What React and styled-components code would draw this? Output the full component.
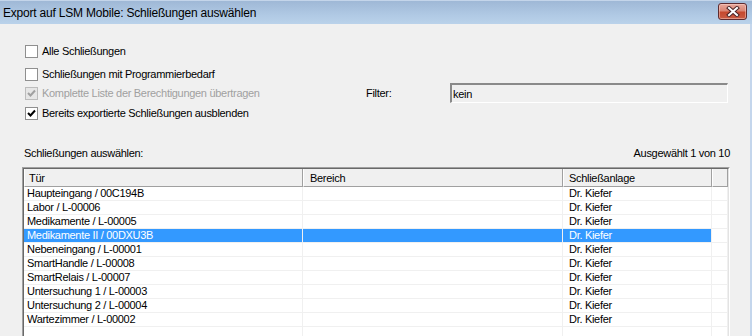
import React from 'react';
import styled, { createGlobalStyle } from 'styled-components';

const GlobalStyle = createGlobalStyle`
    body{
        margin: 0;
        background: #f0f0f0;
        font-family: "Liberation Sans", Arial, sans-serif;
        overflow: hidden;
    }
`

const Window = styled.div`
    width: 752px;
    height: 336px;
    display: flex;
    flex-direction: column;
    overflow: hidden;
`

const TitleBar = styled.header`
    height: 24px;
    flex-shrink: 0;
    box-sizing: border-box;
    border-top: 1px solid #c4d5ea;
    background: linear-gradient(to bottom, #9fb8d6 0%, #b0c9e4 60%, #bad2ea 100%);
    display: flex;
    align-items: center;
    justify-content: space-between;
    padding: 0 5px 0 3px;

    span{
        font-size: 12px;
        color: #000;
        letter-spacing: -0.2px;
    }
`

const CloseButton = styled.div`
    width: 29px;
    height: 17px;
    box-sizing: border-box;
    margin-top: -2px;
    border: 1px solid #5e2b2f;
    border-radius: 3px;
    background: linear-gradient(to bottom, #e8a89c 0%, #d98574 45%, #c5492f 55%, #c95c44 100%);
    box-shadow: inset 0 0 0 1px rgba(255, 220, 210, 0.45);
    display: flex;
    align-items: center;
    justify-content: center;
`

const Body = styled.main`
    flex: 1;
    background: #f0f0f0;
    border-right: 2px solid #c4d6ec;
    display: flex;
    flex-direction: column;
    font-size: 11px;
    letter-spacing: -0.3px;
    color: #000;
`

const CheckRow = styled.div`
    height: 18px;
    margin-top: ${(p) => p.$top}px;
    padding-left: 25px;
    display: flex;
    align-items: center;
`

const CheckLabel = styled.label`
    display: flex;
    align-items: center;
    gap: 4px;
    width: ${(p) => (p.$width ? `${p.$width}px` : 'auto')};
    color: ${(p) => (p.$disabled ? '#a0a0a0' : '#000')};
`

const Box = styled.span`
    width: 13px;
    height: 13px;
    box-sizing: border-box;
    border: 1px solid ${(p) => (p.$disabled ? '#bcbcbc' : '#8f8f8f')};
    background: ${(p) => (p.$disabled ? '#e6e6e6' : '#fff')};
    display: flex;
    align-items: center;
    justify-content: center;
    flex-shrink: 0;
`

const FilterLabel = styled.span`
    width: 84px;
`

const FilterInput = styled.div`
    width: 278px;
    height: 20px;
    box-sizing: border-box;
    border-style: solid;
    border-width: 2px 1px 1px 2px;
    border-color: #8a8a8a #ffffff #ffffff #8a8a8a;
    background: #f0f0f0;
    padding-left: 1px;
    display: flex;
    align-items: center;
`

const SectionHead = styled.div`
    margin-top: 24px;
    height: 14px;
    padding: 0 20px 0 24px;
    display: flex;
    align-items: center;
    justify-content: space-between;
`

const Table = styled.div`
    margin: 7px 0 0 22px;
    width: 708px;
    flex: 1;
    box-sizing: border-box;
    border-style: solid;
    border-width: 1px;
    border-color: #a0a0a0 #ffffff #ffffff #a0a0a0;
`

const TableInner = styled.div`
    height: 100%;
    box-sizing: border-box;
    border-style: solid;
    border-width: 1px;
    border-color: #696969 #e3e3e3 #e3e3e3 #696969;
    background: #fff;
`

const Row = styled.div`
    display: grid;
    grid-template-columns: 279px 260px 149px 16px;
`

const HeadCell = styled.div`
    height: 18px;
    box-sizing: border-box;
    background: #f0f0f0;
    border-left: 1px solid #ffffff;
    border-right: 1px solid #a0a0a0;
    border-bottom: 1px solid #a0a0a0;
    padding-left: ${(p) => p.$pad}px;
    display: flex;
    align-items: center;
`

const Cell = styled.div`
    height: ${(p) => p.$height || 14}px;
    box-sizing: border-box;
    border-right: 1px solid #f0f0f0;
    border-bottom: ${(p) => (p.$last ? 'none' : '1px solid #f0f0f0')};
    padding-left: ${(p) => p.$pad || 0}px;
    line-height: 13px;
    white-space: nowrap;
    overflow: hidden;
    background: ${(p) => (p.$selected ? '#3399ff' : '#fff')};
    color: ${(p) => (p.$selected ? '#fff' : '#000')};
`

const rows = [
    'Haupteingang / 00C194B',
    'Labor / L-00006',
    'Medikamente / L-00005',
    'Medikamente II / 00DXU3B',
    'Nebeneingang / L-00001',
    'SmartHandle / L-00008',
    'SmartRelais / L-00007',
    'Untersuchung 1 / L-00003',
    'Untersuchung 2 / L-00004',
    'Wartezimmer / L-00002',
]

function Check({ checked, disabled }) {
    return (
        <Box $disabled={disabled}>
            {checked && (
                <svg width="9" height="9" viewBox="0 0 9 9">
                    <path d="M1 4 L3.5 6.5 L8 1.5" fill="none" stroke={disabled ? '#a0a0a0' : '#000'} strokeWidth="2" />
                </svg>
            )}
        </Box>
    )
}

function App() {
    return (
        <Window>
            <GlobalStyle />
            <TitleBar>
                <span>Export auf LSM Mobile: Schließungen auswählen</span>
                <CloseButton>
                    <svg width="14" height="11" viewBox="0 0 14 11">
                        <path d="M3 2 L11 9 M11 2 L3 9" stroke="#4a2325" strokeWidth="4" strokeLinecap="square" />
                        <path d="M3 2 L11 9 M11 2 L3 9" stroke="#ffffff" strokeWidth="2" strokeLinecap="square" />
                    </svg>
                </CloseButton>
            </TitleBar>

            <Body>
                <CheckRow $top={18}>
                    <CheckLabel><Check />Alle Schließungen</CheckLabel>
                </CheckRow>
                <CheckRow $top={5}>
                    <CheckLabel><Check />Schließungen mit Programmierbedarf</CheckLabel>
                </CheckRow>
                <CheckRow $top={1}>
                    <CheckLabel $width={341} $disabled><Check checked disabled />Komplette Liste der Berechtigungen übertragen</CheckLabel>
                    <FilterLabel>Filter:</FilterLabel>
                    <FilterInput>kein</FilterInput>
                </CheckRow>
                <CheckRow $top={2}>
                    <CheckLabel><Check checked />Bereits exportierte Schließungen ausblenden</CheckLabel>
                </CheckRow>

                <SectionHead>
                    <span>Schließungen auswählen:</span>
                    <span>Ausgewählt 1 von 10</span>
                </SectionHead>

                <Table>
                    <TableInner>
                        <Row>
                            <HeadCell $pad={4}>Tür</HeadCell>
                            <HeadCell $pad={6}>Bereich</HeadCell>
                            <HeadCell $pad={5}>Schließanlage</HeadCell>
                            <HeadCell $pad={0} />
                        </Row>
                        {rows.map((name, i) => {
                            const sel = i === 3
                            return (
                                <Row key={name}>
                                    <Cell $pad={3} $selected={sel}>{name}</Cell>
                                    <Cell $selected={sel} />
                                    <Cell $pad={6} $selected={sel}>Dr. Kiefer</Cell>
                                    <Cell />
                                </Row>
                            )
                        })}
                        <Row>
                            <Cell $height={30} $last />
                            <Cell $height={30} $last />
                            <Cell $height={30} $last />
                            <Cell $height={30} $last />
                        </Row>
                    </TableInner>
                </Table>
            </Body>
        </Window>
    );
}

export default App;
